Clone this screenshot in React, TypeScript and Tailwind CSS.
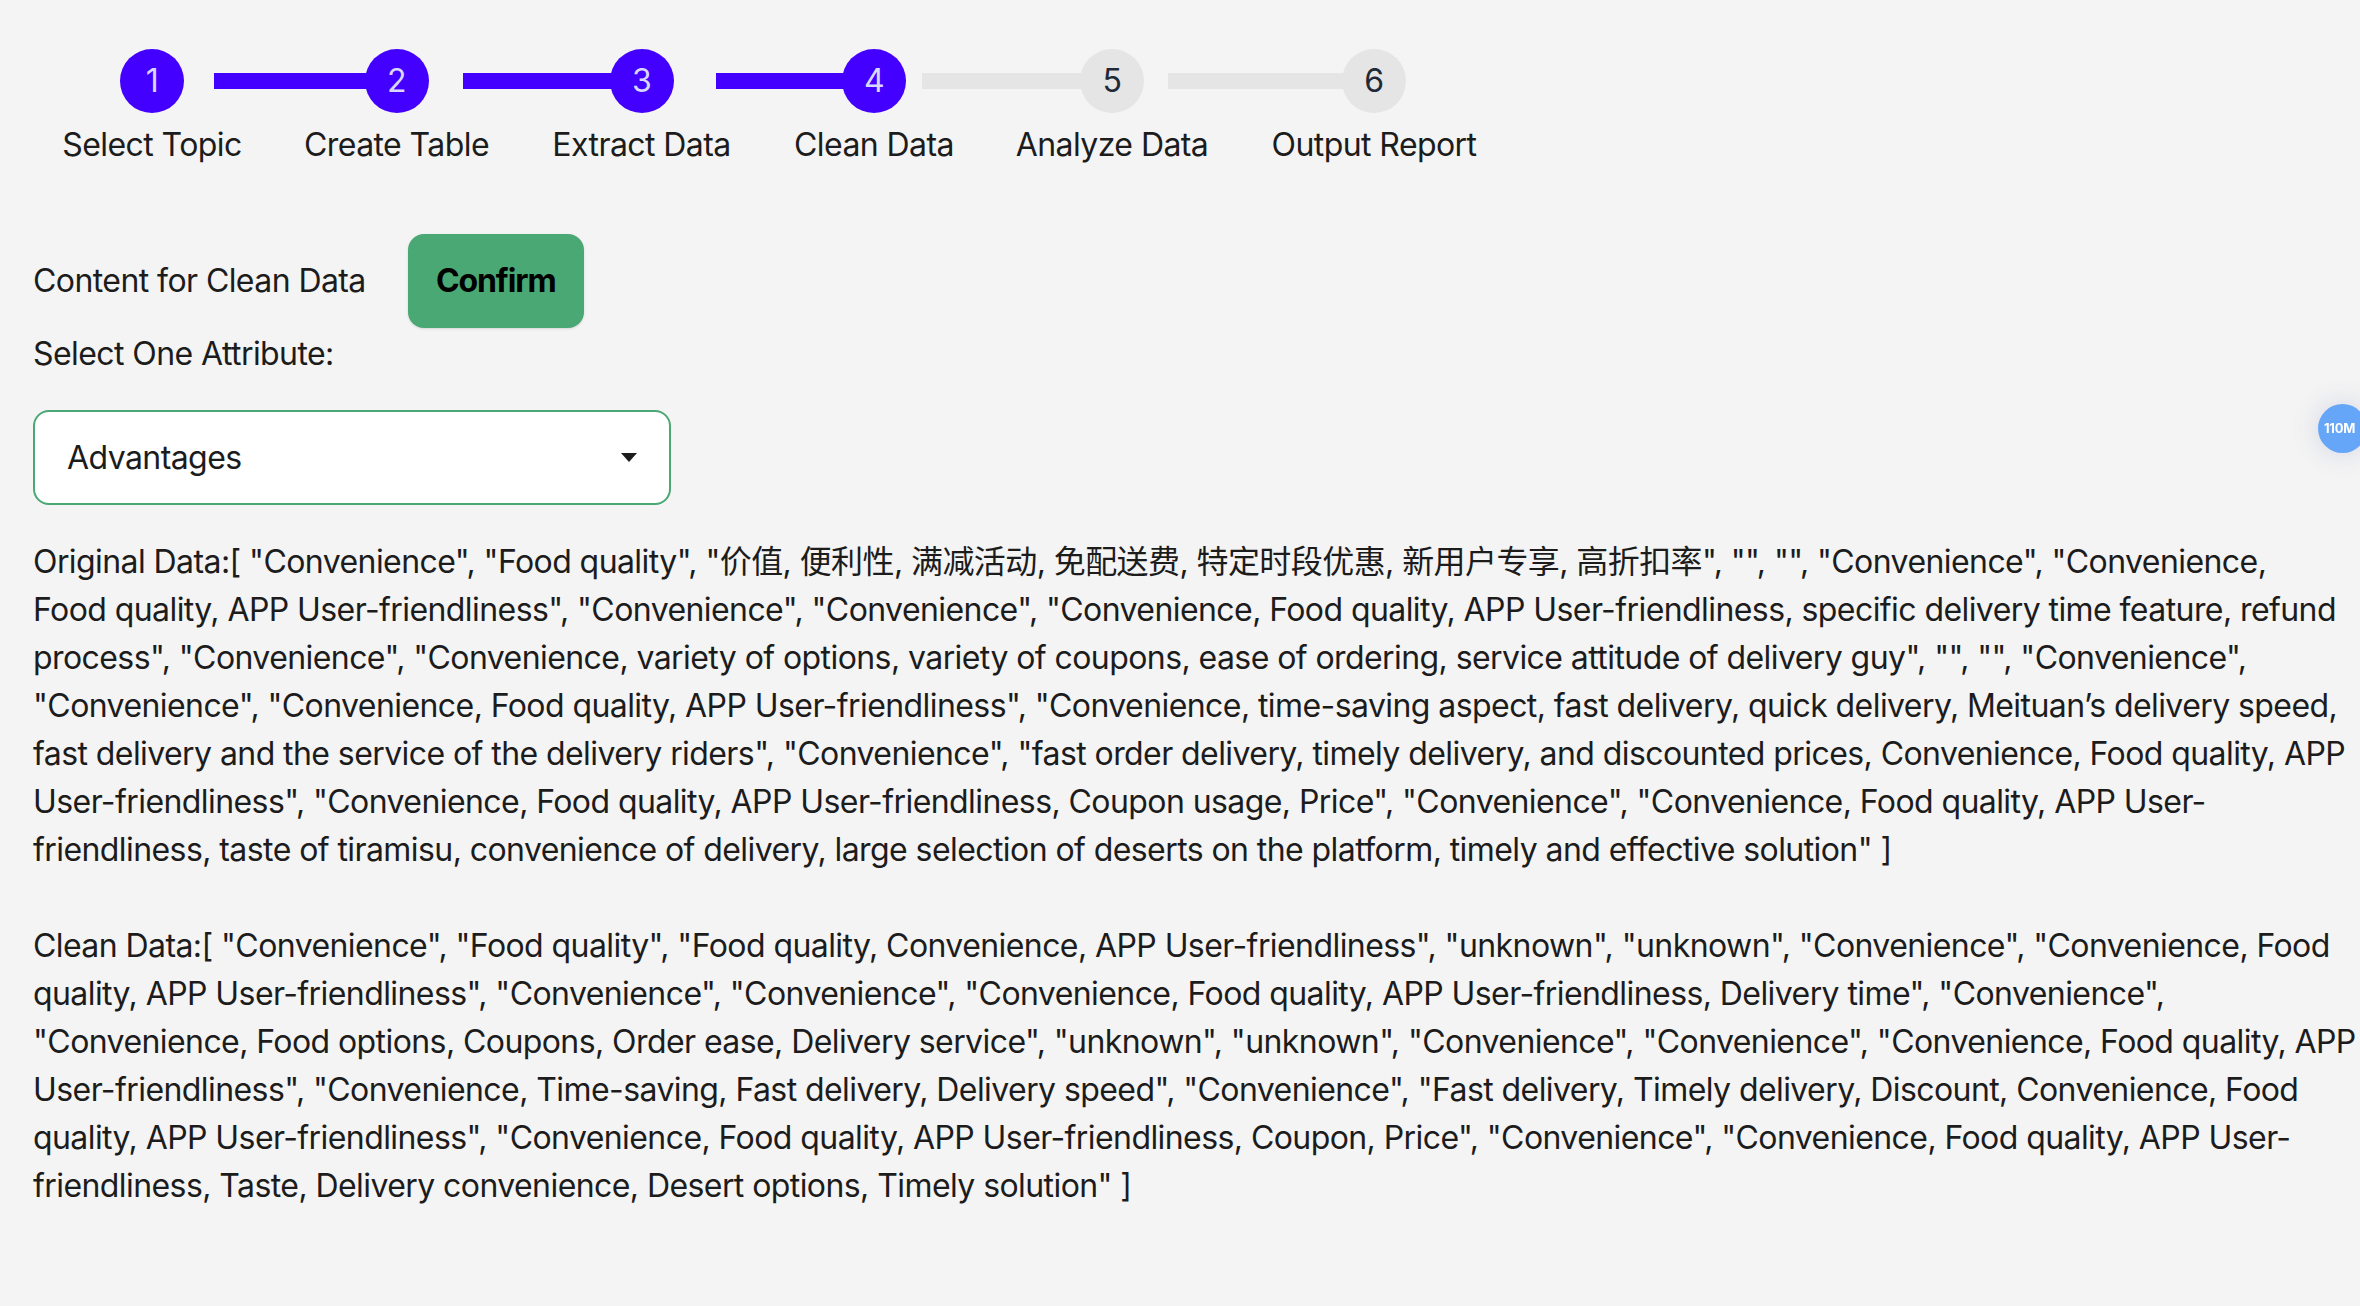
import clsx from "clsx";

const steps = [
  { label: "Select Topic", w: "w-[178px]" },
  { label: "Create Table", w: "w-[183px]" },
  { label: "Extract Data", w: "w-[179px]" },
  { label: "Clean Data", w: "w-[158px]" },
  { label: "Analyze Data", w: "w-[190px]" },
  { label: "Output Report", w: "w-[206px]" },
];

const current = 4;

// lines kept as in the source report so the wrap stays the same
const originalLines = [
  'Original Data:[ "Convenience", "Food quality", "价值, 便利性, 满减活动, 免配送费, 特定时段优惠, 新用户专享, 高折扣率", "", "", "Convenience", "Convenience,',
  'Food quality, APP User-friendliness", "Convenience", "Convenience", "Convenience, Food quality, APP User-friendliness, specific delivery time feature, refund',
  'process", "Convenience", "Convenience, variety of options, variety of coupons, ease of ordering, service attitude of delivery guy", "", "", "Convenience",',
  '"Convenience", "Convenience, Food quality, APP User-friendliness", "Convenience, time-saving aspect, fast delivery, quick delivery, Meituan’s delivery speed,',
  'fast delivery and the service of the delivery riders", "Convenience", "fast order delivery, timely delivery, and discounted prices, Convenience, Food quality, APP',
  'User-friendliness", "Convenience, Food quality, APP User-friendliness, Coupon usage, Price", "Convenience", "Convenience, Food quality, APP User-',
  'friendliness, taste of tiramisu, convenience of delivery, large selection of deserts on the platform, timely and effective solution" ]',
];

const cleanLines = [
  'Clean Data:[ "Convenience", "Food quality", "Food quality, Convenience, APP User-friendliness", "unknown", "unknown", "Convenience", "Convenience, Food',
  'quality, APP User-friendliness", "Convenience", "Convenience", "Convenience, Food quality, APP User-friendliness, Delivery time", "Convenience",',
  '"Convenience, Food options, Coupons, Order ease, Delivery service", "unknown", "unknown", "Convenience", "Convenience", "Convenience, Food quality, APP',
  'User-friendliness", "Convenience, Time-saving, Fast delivery, Delivery speed", "Convenience", "Fast delivery, Timely delivery, Discount, Convenience, Food',
  'quality, APP User-friendliness", "Convenience, Food quality, APP User-friendliness, Coupon, Price", "Convenience", "Convenience, Food quality, APP User-',
  'friendliness, Taste, Delivery convenience, Desert options, Timely solution" ]',
];

function Stepper() {
  return (
    <div className="flex gap-[64px] pl-[63px] pt-[49px]">
      {steps.map((step, i) => (
        <div
          key={step.label}
          className={clsx("relative flex flex-col items-center", step.w)}
        >
          {i > 0 && (
            <div
              className={clsx(
                "absolute right-1/2 top-[24px] h-[16px] w-full",
                i < current ? "bg-[#4400ff]" : "bg-[#e4e5e4]",
              )}
            />
          )}
          <div
            className={clsx(
              "relative z-10 flex size-[64px] items-center justify-center rounded-full text-[32px]",
              i < current
                ? "bg-[#4400ff] text-[#d9d6ff]"
                : "bg-[#e4e5e4] text-[#1f2937]",
            )}
          >
            {i + 1}
          </div>
          <div className="mt-[8px] whitespace-nowrap text-[32px] leading-[48px] text-[#1c1c1c]">
            {step.label}
          </div>
        </div>
      ))}
    </div>
  );
}

function DataBlock({ lines, className }: { lines: string[]; className?: string }) {
  return (
    <div className={clsx("flex flex-col text-[32px] leading-[48px]", className)}>
      {lines.map((line) => (
        <span key={line} className="whitespace-nowrap">
          {line}
        </span>
      ))}
    </div>
  );
}

export default function App() {
  return (
    <div className="min-h-screen overflow-x-hidden bg-[#f4f4f4] pb-[100px] font-['Inter','Noto_Sans_CJK_SC',sans-serif] tracking-[-0.036em] text-[#1c1c1c]">
      <Stepper />

      <div className="pl-[33px] pr-[30px]">
        <div className="mt-[65px] flex items-center gap-[42px]">
          <span className="text-[32px] leading-[48px]">
            Content for Clean Data
          </span>
          <button className="flex h-[94px] w-[176px] items-center justify-center rounded-[16px] bg-[#4aa874] text-[32px] font-bold tracking-[-0.035em] text-black shadow-sm">
            Confirm
          </button>
        </div>

        <div className="mt-[2px] text-[32px] leading-[48px]">
          Select One Attribute:
        </div>

        <div className="mt-[32px] flex h-[95px] w-[638px] items-center justify-between rounded-[16px] border-2 border-[#4aa874] bg-white pl-[32px] pr-[32px]">
          <span className="text-[32px] leading-[48px]">Advantages</span>
          <svg width="16" height="9" viewBox="0 0 16 9">
            <path d="M0 0 L16 0 L8 9 Z" fill="#1c1c1c" />
          </svg>
        </div>

        <DataBlock lines={originalLines} className="mt-[33px]" />
        <DataBlock lines={cleanLines} className="mt-[48px]" />
      </div>

      <div className="fixed right-[-7px] top-[404px] flex size-[49px] items-center rounded-full bg-[#66a6f8] pl-[6px] text-[13px] font-bold tracking-[-0.02em] whitespace-nowrap text-white shadow-[0_0_28px_rgba(60,80,160,0.18)]">
        110M
      </div>
    </div>
  );
}
